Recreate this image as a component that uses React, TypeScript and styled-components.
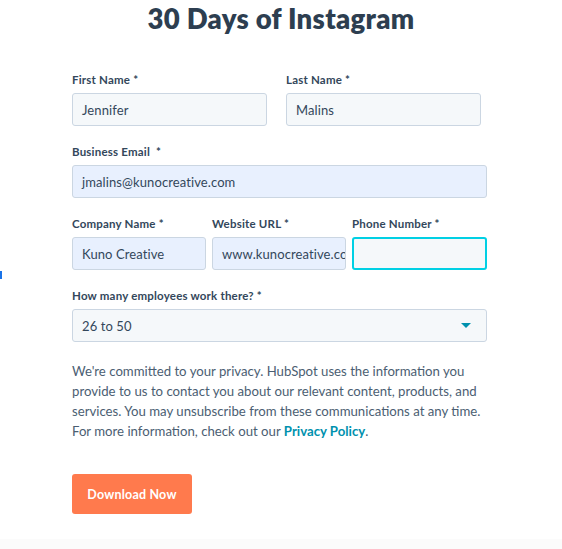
import React from 'react';
import styled, { createGlobalStyle } from 'styled-components';

const GlobalStyle = createGlobalStyle`
  html, body {
    margin: 0;
    padding: 0;
    background: #ffffff;
  }
  body {
    font-family: Lato, 'Liberation Sans', sans-serif;
    color: #33475b;
  }
`;

const Page = styled.div`
  position: relative;
  width: 562px;
  height: 549px;
  overflow: hidden;
  background: #ffffff;
`;

const Title = styled.h1`
  margin: 0;
  padding-top: 4px;
  text-align: center;
  font-size: 27.5px;
  line-height: 30px;
  font-weight: 800;
  color: #2d3e50;
  letter-spacing: 0.3px;
`;

const Form = styled.form`
  margin: 39px 0 0 72px;
  width: 415px;
  display: flex;
  flex-direction: column;
`;

const Row = styled.div<{ $cols: string; $gap: number }>`
  display: grid;
  grid-template-columns: ${({ $cols }) => $cols};
  column-gap: ${({ $gap }) => $gap}px;
  margin-bottom: 19px;
`;

const Field = styled.div`
  display: flex;
  flex-direction: column;
`;

const Label = styled.label`
  font-size: 11.5px;
  font-weight: 700;
  line-height: 14px;
  letter-spacing: 0.2px;
  color: #33475b;
  margin-bottom: 6px;
  white-space: pre;
`;

const Input = styled.div<{ $fill?: boolean; $focus?: boolean }>`
  box-sizing: border-box;
  height: 33px;
  display: flex;
  align-items: center;
  padding: 0 9px;
  font-size: 13px;
  letter-spacing: 0.1px;
  color: #33475b;
  white-space: nowrap;
  overflow: hidden;
  border-radius: 3px;
  background: ${({ $fill }) => ($fill ? '#e8f0fe' : '#f5f8fa')};
  border: ${({ $focus }) => ($focus ? '2px solid #00d0e4' : '1px solid #cbd6e2')};
`;

const Select = styled(Input)`
  justify-content: space-between;
  padding-right: 15px;
`;

const Caret = styled.span`
  width: 0;
  height: 0;
  border-left: 5px solid transparent;
  border-right: 5px solid transparent;
  border-top: 5px solid #0091ae;
`;

const Legal = styled.p`
  margin: 0;
  font-size: 13.2px;
  line-height: 20px;
  color: #4b5e72;
`;

const Link = styled.a`
  color: #0091ae;
  font-weight: 700;
  text-decoration: none;
`;

const Button = styled.button`
  margin-top: 33px;
  width: 120px;
  height: 40px;
  border: none;
  border-radius: 3px;
  background: #ff7a4d;
  color: #ffffff;
  font-family: Lato, 'Liberation Sans', sans-serif;
  font-size: 12.5px;
  font-weight: 700;
  letter-spacing: 0.2px;
  cursor: pointer;
`;

const Footer = styled.div`
  position: absolute;
  left: 0;
  right: 0;
  bottom: 0;
  height: 10px;
  background: #fbfbfb;
`;

const EdgeMark = styled.span`
  position: absolute;
  left: 0;
  top: 271px;
  width: 2px;
  height: 8px;
  background: #1a73e8;
`;

export const App: React.FC = () => {
  return (
    <Page>
      <GlobalStyle />
      <Title>30 Days of Instagram</Title>
      <Form>
        <Row $cols="195px 195px" $gap={19}>
          <Field>
            <Label>First Name *</Label>
            <Input>Jennifer</Input>
          </Field>
          <Field>
            <Label>Last Name *</Label>
            <Input>Malins</Input>
          </Field>
        </Row>
        <Row $cols="1fr" $gap={0}>
          <Field>
            <Label>{'Business Email  *'}</Label>
            <Input $fill>jmalins@kunocreative.com</Input>
          </Field>
        </Row>
        <Row $cols="134px 134px 135px" $gap={6}>
          <Field>
            <Label>Company Name *</Label>
            <Input $fill>Kuno Creative</Input>
          </Field>
          <Field>
            <Label>Website URL *</Label>
            <Input $fill>www.kunocreative.com</Input>
          </Field>
          <Field>
            <Label>Phone Number *</Label>
            <Input $focus />
          </Field>
        </Row>
        <Row $cols="1fr" $gap={0}>
          <Field>
            <Label>How many employees work there? *</Label>
            <Select>
              26 to 50
              <Caret />
            </Select>
          </Field>
        </Row>
        <Legal>
          We're committed to your privacy. HubSpot uses the information you provide to us to contact you
          about our relevant content, products, and services. You may unsubscribe from these communications
          at any time. For more information, check out our <Link href="#">Privacy Policy</Link>.
        </Legal>
        <div>
          <Button type="button">Download Now</Button>
        </div>
      </Form>
      <EdgeMark />
      <Footer />
    </Page>
  );
};

export default App;
